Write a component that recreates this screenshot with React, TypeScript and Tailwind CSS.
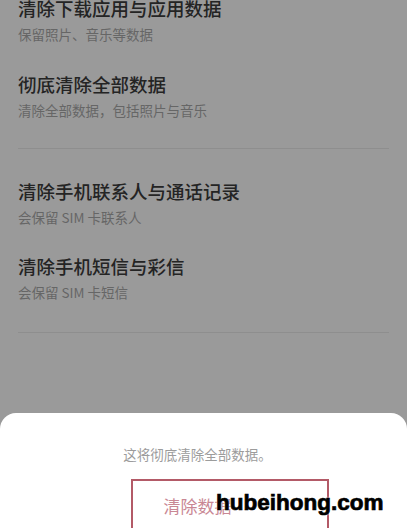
const cjk = "font-['Noto_Sans_CJK_SC','Noto_Sans',sans-serif]";

function Item({ title, sub }: { title: string; sub: string }) {
  return (
    <div className="px-[18px]">
      <p className="text-[18.5px] font-medium leading-[26px] text-[#242424]">{title}</p>
      <p className="mt-[3px] text-[13.5px] leading-[20px] text-[#666666]">{sub}</p>
    </div>
  );
}

export default function App() {
  return (
    <div className={`relative h-[528px] w-[407px] overflow-hidden bg-[#9a9a9a] ${cjk}`}>
      <div className="-mt-[5px] flex flex-col">
        <Item title="清除下载应用与应用数据" sub="保留照片、音乐等数据" />
        <div className="mt-[27px]">
          <Item title="彻底清除全部数据" sub="清除全部数据，包括照片与音乐" />
        </div>
        <div className="mx-[18px] mt-[28px] h-px bg-[#8e8e8e]" />
        <div className="mt-[29px]">
          <Item title="清除手机联系人与通话记录" sub="会保留 SIM 卡联系人" />
        </div>
        <div className="mt-[26px]">
          <Item title="清除手机短信与彩信" sub="会保留 SIM 卡短信" />
        </div>
        <div className="mx-[18px] mt-[30px] h-px bg-[#8e8e8e]" />
      </div>

      <div className="absolute inset-x-0 top-[413px] bottom-0 rounded-t-[16px] bg-white">
        <p className="pt-[31px] pr-[12px] text-center text-[13.5px] leading-[20px] text-[#9c9c9c]">
          这将彻底清除全部数据。
        </p>
        <p className="mt-[30px] pr-[12px] text-center text-[17px] leading-[24px] text-[#c98794]">
          清除数据
        </p>
        <div className="absolute left-[131px] top-[66px] h-[80px] w-[198px] border-2 border-[#b35a67]" />
        <span className="absolute left-[216px] top-[76px] font-['Liberation_Sans',sans-serif] text-[22.5px] font-bold leading-[28px] text-black [-webkit-text-stroke:0.7px_#000] [text-shadow:0_0_2px_#fff,0_0_2px_#fff]">
          hubeihong.com
        </span>
      </div>
    </div>
  );
}
